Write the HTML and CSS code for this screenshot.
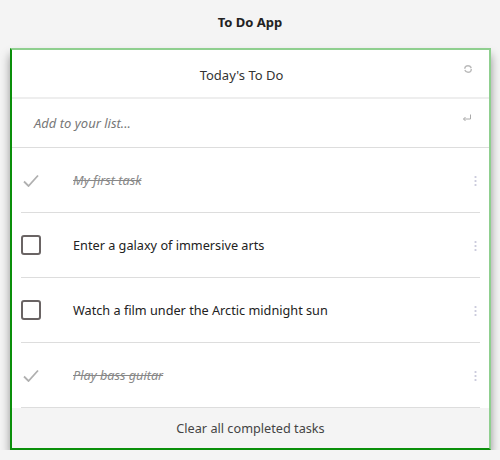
FILE: index.html
```html
<!DOCTYPE html>
<html>
<head>
<meta charset="utf-8">
<link rel="stylesheet" href="styles.css">
</head>
<body>
<h1 class="app-title">To Do App</h1>
<div class="card">
  <div class="card-head">
    <span class="head-title">Today's To Do</span>
    <svg class="head-icon" width="10" height="10" viewBox="0 0 10 10"><circle cx="5" cy="5" r="3.3" fill="none" stroke="#bbb" stroke-width="1.4" stroke-dasharray="9 1.4"/></svg>
  </div>
  <div class="add-row">
    <span class="placeholder">Add to your list...</span>
    <svg class="enter-icon" width="10" height="8" viewBox="0 0 10 8"><path d="M8.5 0.5 V5 H1.5 M3.5 3 L1.5 5 L3.5 7" fill="none" stroke="#aaa" stroke-width="1"/></svg>
  </div>
  <ul class="list">
    <li class="item done">
      <span class="mark"><svg width="16" height="13" viewBox="0 0 16 13"><path d="M1 7.5 L5.5 12 L15 1.5" fill="none" stroke="#b0b0b0" stroke-width="1.8"/></svg></span>
      <span class="text">My first task</span>
      <span class="kebab"></span>
    </li>
    <li class="item">
      <span class="mark"><span class="box"></span></span>
      <span class="text">Enter a galaxy of immersive arts</span>
      <span class="kebab"></span>
    </li>
    <li class="item">
      <span class="mark"><span class="box"></span></span>
      <span class="text">Watch a film under the Arctic midnight sun</span>
      <span class="kebab"></span>
    </li>
    <li class="item done">
      <span class="mark"><svg width="16" height="13" viewBox="0 0 16 13"><path d="M1 7.5 L5.5 12 L15 1.5" fill="none" stroke="#b0b0b0" stroke-width="1.8"/></svg></span>
      <span class="text">Play bass guitar</span>
      <span class="kebab"></span>
    </li>
  </ul>
  <div class="card-foot">Clear all completed tasks</div>
</div>
</body>
</html>
```
FILE: styles.css
```css
* { box-sizing: border-box; }
html, body { margin: 0; padding: 0; }
body {
  background: #f4f4f4;
  font-family: "Noto Sans", "Open Sans", sans-serif;
  color: #333;
  font-size: 12.7px;
}
.app-title {
  margin: 0;
  height: 48px;
  line-height: 44px;
  text-align: center;
  font-size: 13px;
  font-weight: bold;
  color: #222;
}
.card {
  margin: 0 9px 0 10px;
  background: #fff;
  border-style: solid;
  border-width: 2px;
  border-color: #8fcf8f #8fcf8f #0a8f0a #0a8f0a;
  box-shadow: 0 7px 9px rgba(0,0,0,0.4);
}
.card-head {
  position: relative;
  height: 49px;
  display: flex;
  align-items: center;
  justify-content: center;
  border-bottom: 2px solid #eee;
  padding-top: 2px;
  padding-right: 18px;
  font-size: 13px;
  color: #333;
}
.head-icon { position: absolute; right: 16px; top: 14px; }
.add-row {
  position: relative;
  height: 49px;
  display: flex;
  align-items: center;
  padding-left: 22px;
  border-bottom: 1px solid #ddd;
}
.placeholder { font-style: italic; color: #777; font-size: 13px; }
.enter-icon { position: absolute; right: 17px; top: 15px; }
.list { list-style: none; margin: 0; padding: 0 9px; }
.item {
  height: 65px;
  display: flex;
  align-items: center;
  border-bottom: 1px solid #ddd;
}
.mark { width: 52px; display: flex; align-items: center; }
.box {
  width: 20px; height: 20px;
  border: 2px solid #6a6464;
  border-radius: 3px;
}
.done .mark svg { margin-left: 2px; }
.text { flex: 1; color: #222; }
.done .text { font-style: italic; text-decoration: line-through; color: #888; }
.kebab {
  width: 3px; height: 11px;
  margin-right: 3px;
  background: radial-gradient(circle, #ccd 1px, transparent 1.2px) 0 0 / 3px 4px repeat-y;
}
.card-foot {
  height: 40px;
  background: #f4f4f4;
  display: flex;
  align-items: center;
  justify-content: center;
  color: #444;
}
```
